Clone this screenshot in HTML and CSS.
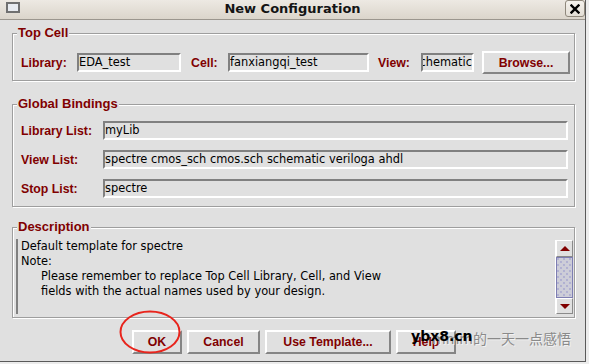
FILE: index.html
```html
<!DOCTYPE html>
<html>
<head>
<meta charset="utf-8">
<link rel="stylesheet" href="styles.css">
</head>
<body>
<div class="window">
  <div class="titlebar">
    <div class="app-icon"></div>
    <div class="title">New Configuration</div>
    <div class="close">
      <svg width="10" height="10" viewBox="0 0 10 10"><path d="M1.5 1.5 L8.5 8.5 M8.5 1.5 L1.5 8.5" stroke="#000" stroke-width="2.4" stroke-linecap="square"/></svg>
    </div>
  </div>
  <div class="content">
    <section class="group group-top">
      <div class="group-title">Top Cell</div>
      <div class="group-body">
        <div class="row">
          <span class="lbl w-lib">Library:</span>
          <div class="input w-libin">EDA_test</div>
          <span class="lbl w-cell">Cell:</span>
          <div class="input w-cellin">fanxiangqi_test</div>
          <span class="lbl w-view">View:</span>
          <div class="input w-viewin scrolled"><span>schematic</span></div>
          <div class="btn w-browse">Browse...</div>
        </div>
      </div>
    </section>

    <section class="group group-global">
      <div class="group-title">Global Bindings</div>
      <div class="group-body">
        <div class="row row-list">
          <span class="lbl w-list">Library List:</span>
          <div class="input grow">myLib</div>
        </div>
        <div class="row row-list">
          <span class="lbl w-list">View List:</span>
          <div class="input grow">spectre cmos_sch cmos.sch schematic veriloga ahdl</div>
        </div>
        <div class="row row-list">
          <span class="lbl w-list">Stop List:</span>
          <div class="input grow">spectre</div>
        </div>
      </div>
    </section>

    <section class="group group-desc">
      <div class="group-title">Description</div>
      <div class="group-body">
        <div class="desc">
          <div class="desc-text">
            <div>Default template for spectre</div>
            <div>Note:</div>
            <div class="indent">Please remember to replace Top Cell Library, Cell, and View</div>
            <div class="indent">fields with the actual names used by your design.</div>
          </div>
          <div class="scrollbar">
            <div class="sb-btn sb-up"><span class="arrow-up"></span></div>
            <div class="sb-thumb"></div>
            <div class="sb-btn sb-down"><span class="arrow-down"></span></div>
          </div>
        </div>
      </div>
    </section>

    <div class="buttons">
      <div class="btn w-ok">OK</div>
      <div class="btn w-cancel">Cancel</div>
      <div class="btn w-tmpl">Use Template...</div>
      <div class="btn w-help">Help</div>
    </div>
  </div>
</div>

<svg class="mark" width="589" height="364" viewBox="0 0 589 364">
  <ellipse cx="150" cy="332" rx="29.5" ry="20.5" fill="none" stroke="#e8241c" stroke-width="2"/>
</svg>
<div class="wm-gray">mmm的一天一点感悟</div>
<div class="wm-black">ybx8.cn</div>
</body>
</html>
```

FILE: styles.css
```css
* { box-sizing: border-box; }

body {
  margin: 0;
  width: 589px;
  height: 364px;
  overflow: hidden;
  background: #ececec;
  font-family: "DejaVu Sans", sans-serif;
  position: relative;
}

.window {
  width: 586px;
  height: 362px;
  background: #e0e0e0;
  border-right: 1px solid #5a5a5a;
  border-bottom: 1px solid #5a5a5a;
  display: flex;
  flex-direction: column;
}

.titlebar {
  height: 20px;
  flex: none;
  display: flex;
  align-items: flex-start;
  background: linear-gradient(#ede9e3, #dbd5cb);
  border-bottom: 1px solid #9b968e;
}

.app-icon {
  width: 14px;
  height: 11px;
  margin: 2px 0 0 6px;
  border: 2px solid #707070;
  background: #e8ebf0;
}

.title {
  flex: 1;
  text-align: center;
  font: bold 13px/17px "DejaVu Sans", sans-serif;
  color: #141414;
}

.close {
  width: 20px;
  height: 17px;
  border: 1px solid #8f887c;
  border-radius: 3px;
  background: linear-gradient(#f5f2ed, #e3ded5);
  display: flex;
  align-items: center;
  justify-content: center;
}

.content {
  flex: 1;
  padding: 13px 10px 0 12px;
  display: flex;
  flex-direction: column;
}

.group {
  border: 1px solid #9e9e9e;
  box-shadow: 1px 1px 0 #fff, inset 1px 1px 0 #fff;
  display: flex;
  flex-direction: column;
}

.group-title {
  align-self: flex-start;
  margin: -8px 0 -6px 4px;
  padding: 0 1px;
  height: 14px;
  background: #e0e0e0;
  font: bold 13px/14px "Liberation Sans", sans-serif;
  color: #800000;
}

.group-body {
  display: flex;
  flex-direction: column;
}

.group-top .group-body { padding: 17px 0 6px 8px; }
.group-global { margin-top: 23px; }
.group-global .group-body { padding: 16px 6px 8px 8px; gap: 10px; }
.group-desc { margin-top: 20px; }
.group-desc .group-body { padding: 11px 1px 3px 3px; }

.row {
  display: flex;
  align-items: center;
  height: 23px;
}
.row-list { height: 19px; }

.lbl {
  flex: none;
  font: bold 12.3px "Liberation Sans", sans-serif;
  color: #800000;
  white-space: nowrap;
}

.w-lib { width: 56px; }
.w-cell { width: 37px; margin-left: 10px; }
.w-view { width: 43px; margin-left: 9px; }
.w-list { width: 82px; }

.input {
  flex: none;
  height: 19px;
  border: 2px solid;
  border-color: #808080 #fff #fff #808080;
  background: #e0e0e0;
  font-size: 11.4px;
  line-height: 15px;
  color: #000;
  white-space: nowrap;
  overflow: hidden;
}
.w-libin { width: 104px; }
.w-cellin { width: 141px; }
.w-viewin { width: 53px; }
.grow { flex: 1; }

.scrolled {
  display: flex;
  justify-content: flex-end;
}
.scrolled span { flex: none; }

.btn {
  flex: none;
  height: 24px;
  border: 2px solid;
  border-color: #fff #858585 #858585 #fff;
  background: #e0e0e0;
  font: bold 12.3px "Liberation Sans", sans-serif;
  color: #800000;
  display: flex;
  align-items: center;
  justify-content: center;
  white-space: nowrap;
}
.w-browse { width: 88px; height: 23px; margin-left: 8px; }

.desc {
  display: flex;
  height: 75px;
}

.desc-text {
  flex: 1;
  border-left: 2px solid #808080;
  padding-left: 3px;
  font-size: 11.4px;
  line-height: 15px;
  color: #000;
  white-space: nowrap;
}
.indent { padding-left: 20px; }

.scrollbar {
  width: 18px;
  margin-top: 1px;
  border-left: 1px solid #fff;
  display: flex;
  flex-direction: column;
}

.sb-btn {
  height: 17px;
  border: 1px solid;
  border-color: #fff #8a8a8a #8a8a8a #fff;
  background: #e0e0e0;
  display: flex;
  align-items: center;
  justify-content: center;
}
.sb-down { height: 16px; }

.arrow-up {
  width: 0;
  height: 0;
  border-left: 5px solid transparent;
  border-right: 5px solid transparent;
  border-bottom: 5px solid #800000;
}
.arrow-down {
  width: 0;
  height: 0;
  border-left: 5px solid transparent;
  border-right: 5px solid transparent;
  border-top: 5px solid #800000;
}

.sb-thumb {
  height: 41px;
  border: 1px solid #7e7eb2;
  background-color: #cdcdd8;
  background-image:
    radial-gradient(circle, #7474c4 0.5px, transparent 0.8px),
    radial-gradient(circle, #7474c4 0.5px, transparent 0.8px);
  background-size: 6px 6px, 6px 6px;
  background-position: 1px 1px, 4px 4px;
}

.buttons {
  display: flex;
  gap: 5px;
  margin: 12px 0 0 120px;
}
.w-ok { width: 50px; }
.w-cancel { width: 73px; }
.w-tmpl { width: 126px; }
.w-help { width: 60px; }

.mark {
  position: absolute;
  left: 0;
  top: 0;
  pointer-events: none;
}

.wm-gray {
  position: absolute;
  left: 432px;
  top: 331px;
  font: 14px/16px "DejaVu Sans", "Noto Sans CJK SC", sans-serif;
  color: #8a8a8a;
  text-shadow: 1px 1px 0 #f2f2f2;
  white-space: nowrap;
}

.wm-black {
  position: absolute;
  left: 411px;
  top: 328px;
  font: bold 14px/16px "DejaVu Sans", sans-serif;
  color: #000;
  white-space: nowrap;
}
```
